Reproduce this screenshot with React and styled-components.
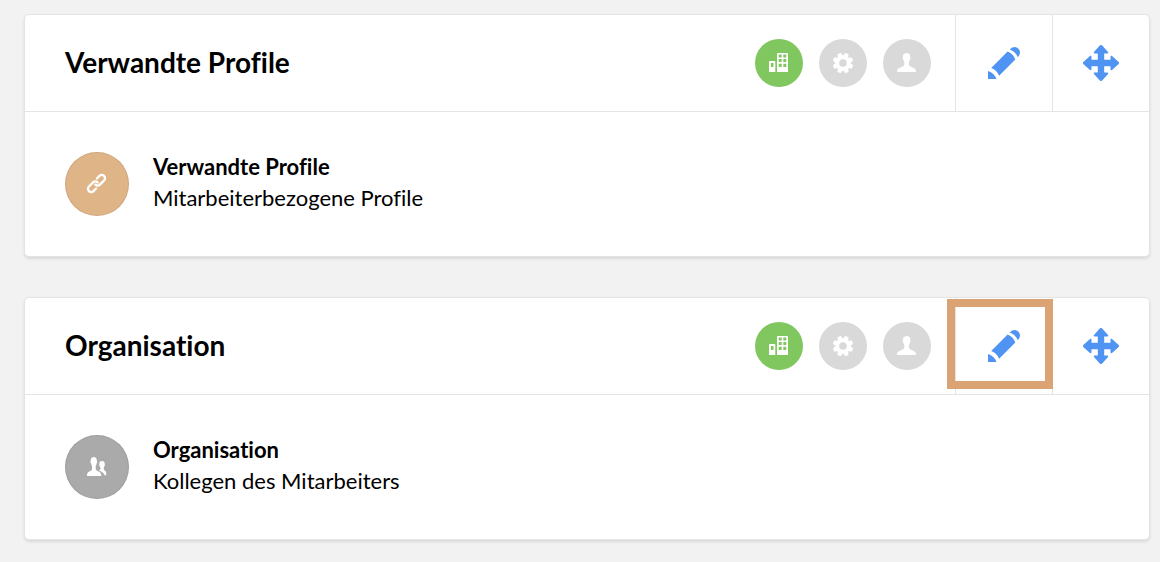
import React from "react";
import styled, { createGlobalStyle } from "styled-components";

const GlobalStyle = createGlobalStyle`
  *, *::before, *::after { box-sizing: border-box; }
  body {
    margin: 0;
    background: #f2f2f2;
    color: #000;
    font-family: Lato, "Liberation Sans", sans-serif;
    font-variant-ligatures: none;
  }
`;

const Page = styled.main`
  display: flex;
  flex-direction: column;
  gap: 40px;
  padding: 14px 10px 22px 24px;
`;

const Card = styled.section`
  background: #fff;
  border: 1px solid #e4e4e4;
  border-radius: 5px;
  box-shadow: 0 2px 3px rgba(0, 0, 0, 0.1);
`;

const CardHeader = styled.header`
  display: flex;
  align-items: stretch;
  height: 97px;
  border-bottom: 1px solid #e4e4e4;
`;

const Title = styled.h2`
  flex: 1;
  align-self: center;
  margin: 0;
  padding: 0 0 2px 40px;
  font-size: 28px;
  line-height: 36px;
  font-weight: 700;
`;

const Roles = styled.div`
  display: flex;
  align-items: center;
  gap: 16px;
  padding-right: 24px;
`;

const RoleButton = styled.button`
  display: grid;
  place-items: center;
  width: 48px;
  height: 48px;
  padding: 0;
  border: 0;
  border-radius: 50%;
  color: #fff;
  background: ${(p) => (p.$active ? "#80c760" : "#d9d9d9")};
  cursor: pointer;
`;

const ActionButton = styled.button`
  position: relative;
  display: grid;
  place-items: center;
  width: 97px;
  padding: 0;
  border: 0;
  border-left: 1px solid #e4e4e4;
  background: transparent;
  color: #4f94f3;
  cursor: pointer;
`;

const Highlight = styled.span`
  position: absolute;
  z-index: 1;
  inset: 1px -1px 5px -9px;
  border: 8px solid #dba274;
  pointer-events: none;
`;

const CardBody = styled.div`
  display: flex;
  gap: 24px;
  padding: 40px;
`;

const Badge = styled.div`
  display: grid;
  place-items: center;
  flex: none;
  width: 64px;
  height: 64px;
  border: 1px solid rgba(0, 0, 0, 0.08);
  border-radius: 50%;
  color: #fff;
  background: ${(p) => p.$color};
`;

const Name = styled.h3`
  margin: 0;
  font-size: 22px;
  line-height: 30px;
  font-weight: 700;
`;

const Description = styled.p`
  margin: 0;
  font-size: 22px;
  line-height: 32px;
`;

function Icon({ size, children }) {
  return (
    <svg width={size} height={size} viewBox={`0 0 ${size} ${size}`} fill="currentColor" aria-hidden="true">
      {children}
    </svg>
  );
}

const CompanyIcon = () => (
  <Icon size={24}>
    <path
      fillRule="evenodd"
      d="M3 10h4.300a1 1 0 0 1 1 1v10H2V11a1 1 0 0 1 1-1ZM4 12v4h2.500v-4ZM11 2h9a1 1 0 0 1 1 1v18H10V3a1 1 0 0 1 1-1ZM11.700 3.500v3h3v-3ZM16.300 3.500v3h3v-3ZM11.700 8v3h3V8ZM16.300 8v3h3V8ZM11.700 12.700v3.300h3v-3.300ZM16.300 12.700v3.300h3v-3.300Z"
    />
  </Icon>
);

const GearIcon = () => (
  <Icon size={24}>
    <circle cx="12" cy="12" r="5.800" fill="none" stroke="currentColor" strokeWidth="4" />
    {[22.5, 67.5, 112.5, 157.5, 202.5, 247.5, 292.5, 337.5].map((angle) => (
      <path key={angle} d="M9.300 6 10 2Q12 1.200 14 2L14.700 6Z" transform={`rotate(${angle} 12 12)`} />
    ))}
  </Icon>
);

const PersonIcon = () => (
  <Icon size={24}>
    <path d="M11.700 2c2.300 0 3.700 1.600 3.600 4 .5.600.3 2-.4 2.500-.3 1.500-1 2.300-1 2.900v2.200c0 1.500 1.800 2.200 4.300 3.200 2.200.8 2.800 2 2.800 4.200H2c0-2.200.6-3.400 2.800-4.200 2.500-1 4.500-1.700 4.500-3.200v-2.200c0-.6-.7-1.400-1-2.900C7.600 8 7.400 6.600 7.900 6c-.2-2.300.9-3.400 2.400-3.500.3-.3.800-.5 1.400-.5Z" />
  </Icon>
);

const PencilIcon = () => (
  <Icon size={32}>
    <path d="M0 24c4.200 1.200 7.200 4 8.500 8H0ZM19.600 4.600c3.500 1.300 6.400 4.200 7.700 7.800L11.100 28.800c-1.300-3.600-4.200-6.600-7.900-7.900ZM21.700 2.500C23.300.8 25 0 27 0c2.800.2 5 2.700 5 5.300 0 1.800-.7 3.300-2.200 4.900-1.300-3.600-4.300-6.500-8.100-7.700Z" />
  </Icon>
);

const MoveIcon = () => (
  <Icon size={36}>
    {[0, 90, 180, 270].map((angle) => (
      <path
        key={angle}
        d="M14.800 21V8.500h-2.800c-1.400 0-1.600-1-.8-1.800l5.600-6.100a1.600 1.600 0 0 1 2.400 0l5.600 6.100c.8.800.6 1.800-.8 1.800h-2.800V21Z"
        transform={`rotate(${angle} 18 18)`}
      />
    ))}
  </Icon>
);

const LinkIcon = () => (
  <Icon size={24}>
    <g fill="none" stroke="currentColor" strokeWidth="2.300" strokeLinecap="round" transform="translate(11.500 11.500)">
      {[-45, 135].map((angle) => (
        <path
          key={angle}
          d="M3.800 -3.200H7.500A3.200 3.200 0 0 1 7.500 3.200H1.600A3.200 3.200 0 0 1 -1.600 0"
          transform={`rotate(${angle})`}
        />
      ))}
    </g>
  </Icon>
);

const PeopleIcon = () => (
  <Icon size={24}>
    <path d="M8.700 2c2.200 0 3.300 1.700 3.200 4 .6.700.3 2.200-.3 2.600-.2 1.500-.9 2.200-.9 2.900v2.200c0 1.400 1.300 2 3 2.800 2 .9 2.600 2.200 2.600 4.500H2c0-2.300.5-3.600 2.300-4.400C5.900 15.800 7 15.200 7 13.700v-2.200c0-.7-.7-1.400-.9-2.900-.7-.4-.9-1.900-.4-2.600-.1-2 .7-3.200 1.700-3.400.3-.4.700-.6 1.300-.6Z" />
    <path d="M17 6c2 0 2.900 1.200 2.700 3.200.4.600.2 1.500-.3 1.900-.2 1-.6 1.500-.6 2v1.200c0 1.300 2.400 1.400 2.400 3.500v2.400h-1.500c-.7-2.200-3-3.800-5.900-4.800 1.100-.5 1.700-.9 1.700-1.600v-.7c0-.5-.6-1-.8-2-.5-.4-.7-1.300-.3-1.900-.2-2 .6-3.200 2.600-3.200Z" />
  </Icon>
);

const sections = [
  {
    title: "Verwandte Profile",
    description: "Mitarbeiterbezogene Profile",
    color: "#dfb587",
    BadgeIcon: LinkIcon,
  },
  {
    title: "Organisation",
    description: "Kollegen des Mitarbeiters",
    color: "#aaaaaa",
    BadgeIcon: PeopleIcon,
    highlighted: true,
  },
];

function SectionCard({ title, description, color, BadgeIcon, highlighted }) {
  return (
    <Card>
      <CardHeader>
        <Title>{title}</Title>
        <Roles>
          <RoleButton type="button" aria-label="Unternehmen" $active>
            <CompanyIcon />
          </RoleButton>
          <RoleButton type="button" aria-label="Administrator">
            <GearIcon />
          </RoleButton>
          <RoleButton type="button" aria-label="Mitarbeiter">
            <PersonIcon />
          </RoleButton>
        </Roles>
        <ActionButton type="button" aria-label="Bearbeiten">
          <PencilIcon />
          {highlighted && <Highlight />}
        </ActionButton>
        <ActionButton type="button" aria-label="Verschieben">
          <MoveIcon />
        </ActionButton>
      </CardHeader>
      <CardBody>
        <Badge $color={color}>
          <BadgeIcon />
        </Badge>
        <div>
          <Name>{title}</Name>
          <Description>{description}</Description>
        </div>
      </CardBody>
    </Card>
  );
}

export default function App() {
  return (
    <>
      <GlobalStyle />
      <Page>
        {sections.map((section) => (
          <SectionCard key={section.title} {...section} />
        ))}
      </Page>
    </>
  );
}
